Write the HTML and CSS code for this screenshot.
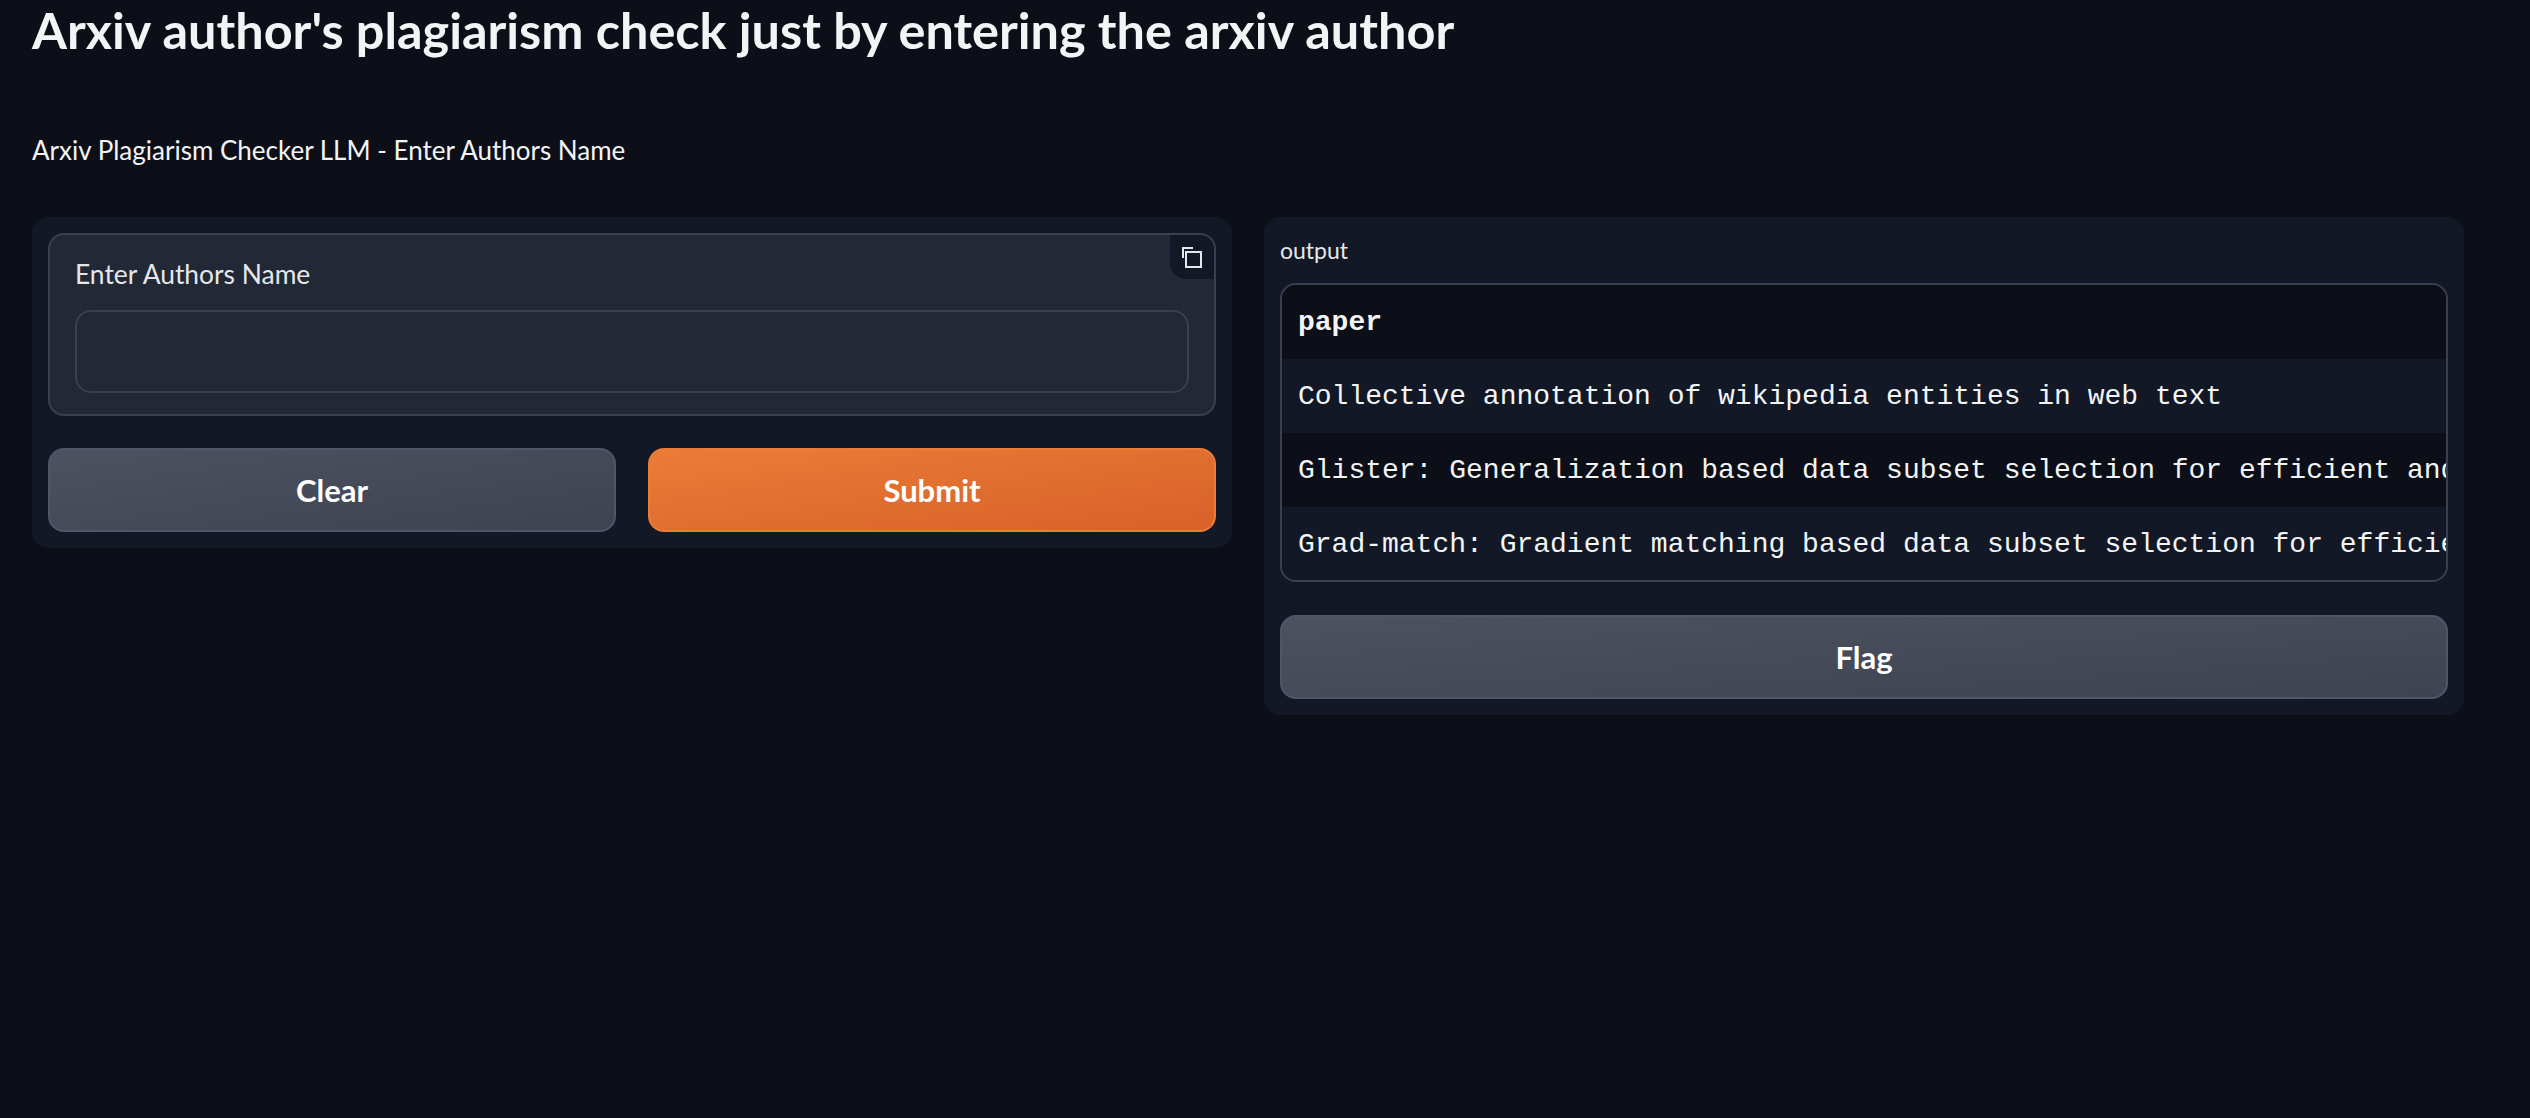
FILE: index.html
```html
<!DOCTYPE html>
<html lang="en">
<head>
  <meta charset="UTF-8" />
  <title>Arxiv Plagiarism Checker LLM</title>
  <link rel="stylesheet" href="styles.css">
</head>
<body>
  <div class="container">
    <h1>Arxiv author's plagiarism check just by entering the arxiv author</h1>
    <p class="subtitle">Arxiv Plagiarism Checker LLM - Enter Authors Name</p>
    <div class="columns">
      <div class="panel">
        <div class="block">
          <div class="copy-corner">
            <svg width="24" height="24" viewBox="0 0 24 24" fill="none" stroke="#e5e7eb" stroke-width="2">
              <path d="M3 13V3H13" />
              <rect x="6" y="7" width="15" height="15" />
            </svg>
          </div>
          <label for="author">Enter Authors Name</label>
          <input type="text" id="author" />
        </div>
        <div class="btn-row">
          <button type="button" class="btn">Clear</button>
          <button type="button" class="btn btn-primary">Submit</button>
        </div>
      </div>
      <div class="panel">
        <div class="output-label">output</div>
        <div class="table-wrap">
          <table>
            <thead>
              <tr><th>paper</th></tr>
            </thead>
            <tbody>
              <tr><td>Collective annotation of wikipedia entities in web text</td></tr>
              <tr><td>Glister: Generalization based data subset selection for efficient and robust learning</td></tr>
              <tr><td>Grad-match: Gradient matching based data subset selection for efficient deep model training</td></tr>
            </tbody>
          </table>
        </div>
        <button type="button" class="btn btn-flag">Flag</button>
      </div>
    </div>
  </div>
</body>
</html>
```

FILE: styles.css
```css
* {
  box-sizing: border-box;
}
body {
  font-family: "Lato", "Noto Sans", sans-serif;
  background-color: #0c0f17;
  color: #f3f4f6;
  margin: 0;
  height: 1118px;
  overflow: hidden;
}
.container {
  width: 2432px;
  margin-left: 32px;
}
h1 {
  font-size: 50.4px;
  font-weight: 700;
  line-height: 60px;
  margin: 0;
  color: #f3f4f6;
}
.subtitle {
  font-size: 26px;
  line-height: 40px;
  margin: 70px 0 0;
  color: #f3f4f6;
}
.columns {
  display: grid;
  grid-template-columns: 1200px 1200px;
  gap: 32px;
  align-items: start;
  margin-top: 47px;
}
.panel {
  background-color: #121825;
  border-radius: 16px;
  padding: 16px;
}
.block {
  position: relative;
  background-color: #222835;
  border: 2px solid #3a404e;
  border-radius: 16px;
  padding: 19px 25px 21px;
}
.copy-corner {
  position: absolute;
  top: 0;
  right: 0;
  width: 44px;
  height: 44px;
  background-color: #121825;
  border-radius: 0 14px 0 16px;
  display: flex;
  justify-content: center;
  align-items: center;
}
label {
  display: block;
  font-size: 26.4px;
  line-height: 40px;
  margin-bottom: 16px;
  color: #e5e7eb;
}
input[type="text"] {
  display: block;
  width: 100%;
  height: 83px;
  background-color: #222835;
  border: 2px solid #3a404e;
  border-radius: 16px;
  outline: none;
}
.btn-row {
  display: grid;
  grid-template-columns: 1fr 1fr;
  gap: 32px;
  margin-top: 32px;
}
.btn {
  display: block;
  width: 100%;
  height: 84px;
  border: 2px solid #50566a;
  border-radius: 16px;
  background: linear-gradient(to bottom right, #4c5260, #3e4351);
  color: #ffffff;
  font-family: inherit;
  font-size: 31px;
  font-weight: 700;
}
.btn-primary {
  border-color: #ea7c35;
  background: linear-gradient(to bottom right, #ea7c37, #d8612a);
}
.btn-flag {
  margin-top: 33px;
}
.output-label {
  font-size: 23px;
  line-height: 34px;
  margin-bottom: 16px;
  color: #e5e7eb;
}
.table-wrap {
  height: 299px;
  border: 2px solid #3a404e;
  border-radius: 16px;
  overflow: hidden;
}
table {
  border-collapse: collapse;
  min-width: 100%;
  white-space: nowrap;
  font-family: "Liberation Mono", monospace;
  font-size: 28px;
}
th,
td {
  height: 74px;
  padding: 1px 16px 0;
  text-align: left;
}
th {
  font-weight: 700;
  background-color: #0c0f17;
}
tbody tr:nth-child(odd) {
  background-color: #121825;
}
tbody tr:nth-child(even) {
  background-color: #0c0f17;
}
```
